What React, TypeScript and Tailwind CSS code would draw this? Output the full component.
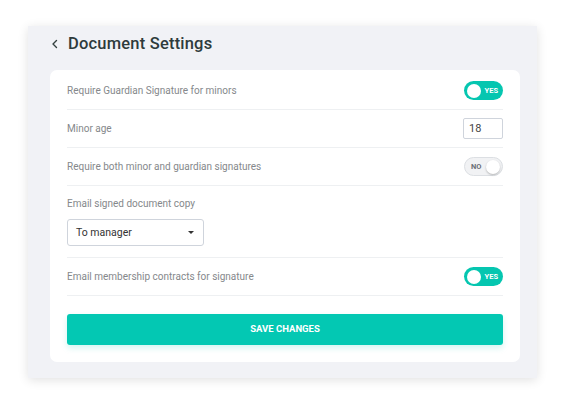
import * as React from 'react';

function Toggle({ on }: { on: boolean }) {
  if (on) {
    return (
      <div className="flex h-[19px] w-[39px] items-center justify-between rounded-full bg-[#05c6b0] pl-[3px] pr-[5px]">
        <span className="h-[14px] w-[14px] rounded-full bg-white" />
        <span className="text-[7.5px] font-bold leading-none text-white">YES</span>
      </div>
    );
  }
  return (
    <div className="flex h-[19px] w-[39px] items-center justify-between rounded-full border border-[#dcdfe3] bg-[#f1f2f4] pl-[6px] pr-[2px]">
      <span className="text-[7.5px] font-bold leading-none text-[#6b7077]">NO</span>
      <span className="h-[14px] w-[14px] rounded-full bg-white shadow-[0_1px_2px_rgba(0,0,0,0.25)]" />
    </div>
  );
}

function Row({ label, children }: { label: string; children: React.ReactNode }) {
  return (
    <div className="flex h-[38px] items-center justify-between border-b border-[#eef0f2]">
      <span className="text-[10px] text-[#85888b]">{label}</span>
      {children}
    </div>
  );
}

export default function App() {
  const [age, setAge] = React.useState('18');
  return (
    <div
      className="h-[404px] w-[566px] bg-white pl-[28px] pt-[26px]"
      style={{ fontFamily: 'Roboto, "Liberation Sans", sans-serif' }}
    >
      <div className="h-[352px] w-[509px] bg-[#f1f2f6] pl-[22px] pr-[17px] shadow-[0_2px_10px_rgba(0,0,0,0.12)]">
        <div className="flex h-[44px] items-center gap-[9px] pb-[8px] pl-[1px]">
          <svg width="8" height="10" viewBox="0 0 8 10" fill="none">
            <path d="M5.5 1.5 L2 5 L5.5 8.5" stroke="#33403f" strokeWidth="1.4" strokeLinecap="round" strokeLinejoin="round" />
          </svg>
          <h1 className="text-[16.5px] font-medium tracking-[0.2px] text-[#2e3b3c]">Document Settings</h1>
        </div>
        <div className="rounded-[7px] bg-white px-[17px] pb-[17px] pt-[2px]">
          <Row label="Require Guardian Signature for minors">
            <Toggle on />
          </Row>
          <Row label="Minor age">
            <input
              value={age}
              onChange={(e) => setAge(e.target.value)}
              className="h-[21px] w-[40px] rounded-[2px] border border-[#cfd4dc] px-[5px] text-[11px] text-[#444] outline-none"
            />
          </Row>
          <Row label="Require both minor and guardian signatures">
            <Toggle on={false} />
          </Row>
          <div className="flex h-[72px] flex-col border-b border-[#eef0f2] pt-[12px]">
            <span className="text-[10px] leading-[12px] text-[#85888b]">Email signed document copy</span>
            <div className="mt-[9px] flex h-[27px] w-[137px] items-center justify-between rounded-[3px] border border-[#cfd4dc] pl-[8px] pr-[9px]">
              <span className="text-[10.5px] text-[#333]">To manager</span>
              <svg width="6" height="3" viewBox="0 0 6 3">
                <path d="M0 0 H6 L3 3 Z" fill="#333" />
              </svg>
            </div>
          </div>
          <Row label="Email membership contracts for signature">
            <Toggle on />
          </Row>
          <button className="mt-[18px] flex h-[31px] w-full items-center justify-center rounded-[3px] bg-[#03c8b3] text-[9.5px] font-bold uppercase text-white shadow-[0_3px_6px_rgba(3,200,179,0.18)]">
            Save changes
          </button>
        </div>
      </div>
    </div>
  );
}
